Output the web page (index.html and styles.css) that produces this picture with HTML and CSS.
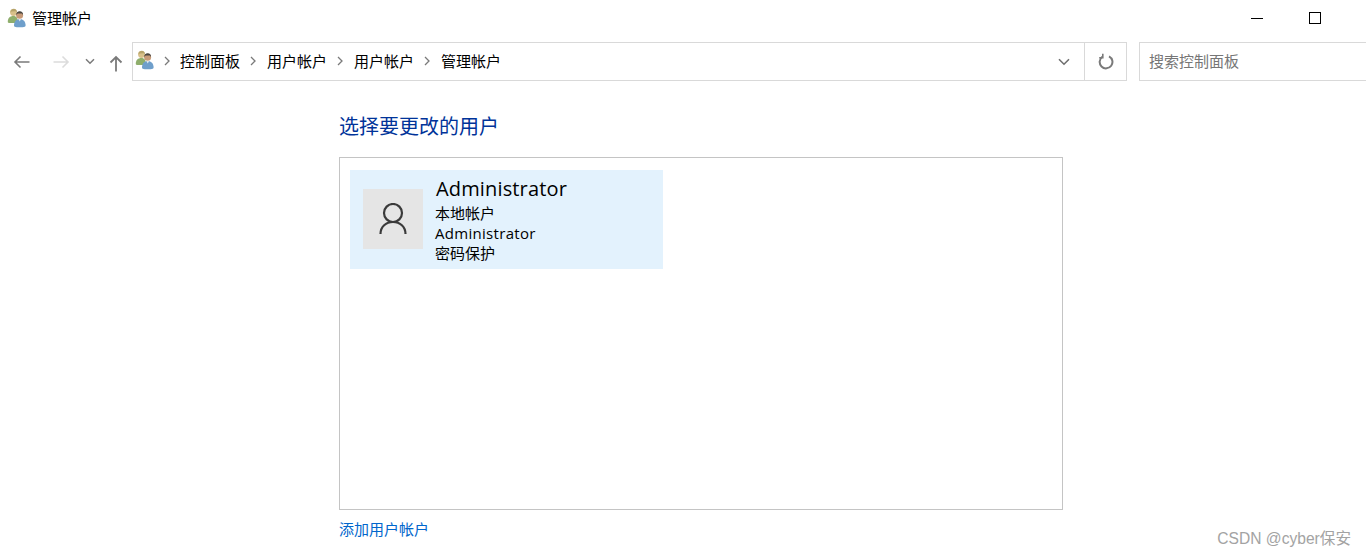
FILE: index.html
```html
<!DOCTYPE html>
<html lang="zh-CN">
<head>
<meta charset="utf-8">
<title>管理帐户</title>
<link rel="stylesheet" href="styles.css">
</head>
<body>
<svg class="defs" width="0" height="0" aria-hidden="true">
  <defs>
    <symbol id="people" viewBox="0 0 20 20">
      <circle cx="6.5" cy="4.5" r="3.4" fill="#d8c08a"/>
      <path d="M3.4 4.5C3.4 2 5 .8 6.8.8S10 2 10 4.3L8.6 3.2 4.6 3.4z" fill="#b5a36a"/>
      <path d="M.8 14c0-4 2.2-6 5.5-6s4.5 2 4.5 6c0 .6-1 1-2.5 1H3c-1.400 0-2.200-.4-2.200-1z" fill="#8fae6c"/>
      <circle cx="12.600" cy="7.200" r="3.500" fill="#c79a78"/>
      <path d="M9.200 7C9 4.500 10.600 3.200 12.700 3.200S16.300 4.500 16 7L14.800 5.500 10.600 5.600z" fill="#4a4640"/>
      <path d="M7 17.500c0-4.300 2.400-6.600 5.700-6.600s5.900 2.300 5.900 6.600c0 1-1.200 1.700-3 1.700H9.800C8 19.200 7 18.500 7 17.500z" fill="#6f9fcb"/>
      <path d="M11.300 11h2.800l-1.400 2.400z" fill="#dfe8ee"/>
    </symbol>
    <symbol id="chev" viewBox="0 0 8 10">
      <path d="M2 1l4 4-4 4" fill="none" stroke="#7a7a7a" stroke-width="1.300"/>
    </symbol>
  </defs>
</svg>

<header class="titlebar">
  <svg class="icon-people"><use href="#people"/></svg>
  <span class="title">管理帐户</span>
  <div class="window-controls">
    <span class="win-btn"><svg width="12" height="12" viewBox="0 0 12 12"><path d="M0 6.500h12" stroke="#000" stroke-width="1"/></svg></span>
    <span class="win-btn"><svg width="12" height="12" viewBox="0 0 12 12"><rect x=".5" y=".5" width="11" height="11" fill="none" stroke="#000"/></svg></span>
  </div>
</header>

<nav class="navbar">
  <div class="nav-buttons">
    <svg class="nav-back" width="18" height="14" viewBox="0 0 18 14"><path d="M16.500 7H2M7.500 1.500L2 7l5.500 5.500" fill="none" stroke="#7a7a7a" stroke-width="1.600"/></svg>
    <svg class="nav-forward" width="18" height="14" viewBox="0 0 18 14"><path d="M1.500 7H16M10.500 1.500L16 7l-5.500 5.500" fill="none" stroke="#dcdcdc" stroke-width="1.600"/></svg>
    <svg class="nav-down" width="10" height="7" viewBox="0 0 10 7"><path d="M1 1.200l4 4 4-4" fill="none" stroke="#7a7a7a" stroke-width="1.500"/></svg>
    <svg class="nav-up" width="14" height="17" viewBox="0 0 14 17"><path d="M7 16.500V2M1.500 7.500L7 2l5.500 5.500" fill="none" stroke="#7a7a7a" stroke-width="1.800"/></svg>
  </div>
  <div class="address">
    <svg class="icon-people crumb-icon"><use href="#people"/></svg>
    <svg class="chev"><use href="#chev"/></svg>
    <span class="crumb">控制面板</span>
    <svg class="chev"><use href="#chev"/></svg>
    <span class="crumb">用户帐户</span>
    <svg class="chev"><use href="#chev"/></svg>
    <span class="crumb">用户帐户</span>
    <svg class="chev"><use href="#chev"/></svg>
    <span class="crumb">管理帐户</span>
    <span class="addr-drop"><svg width="12" height="8" viewBox="0 0 12 8"><path d="M1 1.200l5 5 5-5" fill="none" stroke="#6f6f6f" stroke-width="1.600"/></svg></span>
    <span class="addr-refresh"><svg width="16" height="17" viewBox="0 0 16 17"><path d="M4.300 3.800A6.400 6.400 0 1 0 11 3.300" fill="none" stroke="#7a7a7a" stroke-width="2"/><path d="M4.200 .8v4h-3.600" fill="none" stroke="#7a7a7a" stroke-width="1.600" transform="translate(.6 0)"/></svg></span>
  </div>
  <div class="search">搜索控制面板</div>
</nav>

<main class="content">
  <h1 class="heading">选择要更改的用户</h1>
  <section class="userlist">
    <div class="tile">
      <div class="avatar">
        <svg width="28" height="32" viewBox="0 0 28 32"><circle cx="14" cy="10" r="9" fill="none" stroke="#3a3a3a" stroke-width="2.200"/><path d="M1.500 31C1.500 23.500 7 19 14 19s12.500 4.500 12.500 12" fill="none" stroke="#3a3a3a" stroke-width="2.200"/></svg>
      </div>
      <div class="tile-text">
        <div class="user-name">Administrator</div>
        <div class="user-line">本地帐户</div>
        <div class="user-line user-latin">Administrator</div>
        <div class="user-line">密码保护</div>
      </div>
    </div>
  </section>
  <a class="add-link" href="#">添加用户帐户</a>
</main>

<div class="watermark">CSDN @cyber保安</div>
</body>
</html>
```

FILE: styles.css
```css
* { box-sizing: border-box; }
html, body { margin: 0; height: 100%; }
body {
  position: relative;
  height: 557px;
  overflow: hidden;
  background: #fff;
  color: #000;
  font-family: "Open Sans", "Noto Sans CJK SC", sans-serif;
  font-size: 15px;
}
.defs { position: absolute; }

.titlebar {
  display: flex;
  align-items: center;
  height: 42px;
  padding: 0 0 6px 7px;
}
.icon-people { width: 20px; height: 20px; flex: none; }
.title { margin-left: 5px; line-height: 20px; }
.window-controls { display: flex; margin-left: auto; margin-right: 22px; }
.win-btn { display: flex; justify-content: center; align-items: center; width: 58px; height: 20px; }

.navbar { display: flex; height: 39px; }
.nav-buttons { display: flex; align-items: center; width: 132px; flex: none; padding-left: 13px; }
.nav-forward { margin-left: 21px; }
.nav-down { margin-left: 15px; }
.nav-up { margin-left: 14px; margin-top: 4px; }

.address {
  display: flex;
  align-items: center;
  width: 995px;
  flex: none;
  border: 1px solid #d9d9d9;
  padding-left: 2px;
}
.crumb-icon { margin-top: -3px; }
.chev { width: 8px; height: 10px; margin: 0 10px 0 9px; flex: none; margin-top: -2px; }
.crumb { line-height: 20px; margin-top: -2px; }
.address .crumb + .chev { margin-left: 9px; margin-right: 10px; }
.address .crumb-icon + .chev { margin-left: 8px; margin-right: 9px; }
.addr-drop {
  display: flex; align-items: center; justify-content: center;
  width: 42px; height: 100%;
  margin-left: auto;
  border-right: 1px solid #d9d9d9;
}
.addr-refresh { display: flex; align-items: center; justify-content: center; width: 41px; height: 100%; }

.search {
  flex: 1;
  margin-left: 12px;
  margin-right: -4px;
  border: 1px solid #d9d9d9;
  padding-left: 9px;
  line-height: 37px;
  color: #767676;
}

.content { padding: 32px 0 0 339px; }
.heading {
  margin: 0;
  font-size: 20px;
  font-weight: 400;
  line-height: 27px;
  color: #003399;
}
.userlist {
  width: 724px;
  height: 353px;
  margin-top: 17px;
  border: 1px solid #c4c4c4;
  padding: 12px 10px;
}
.tile {
  display: flex;
  width: 313px;
  height: 99px;
  padding: 19px 0 0 13px;
  background: #e3f2fd;
}
.avatar {
  display: flex; align-items: center; justify-content: center;
  width: 60px; height: 60px; flex: none;
  background: #e5e5e5;
}
.tile-text { margin: -10px 0 0 12px; }
.user-name { font-size: 20px; line-height: 22px; padding-left: 1px; margin-top: -1px; margin-bottom: 3px; letter-spacing: .15px; }
.user-line { line-height: 20px; }
.user-latin { letter-spacing: .3px; }

.add-link {
  display: block;
  margin-top: 9px;
  line-height: 20px;
  color: #0066cc;
  text-decoration: none;
}

.watermark {
  position: absolute;
  right: 15px;
  bottom: 8px;
  font-family: "Liberation Sans", "Noto Sans CJK SC", sans-serif;
  font-size: 15.6px;
  line-height: 20px;
  color: #a3a3a3;
}
```
